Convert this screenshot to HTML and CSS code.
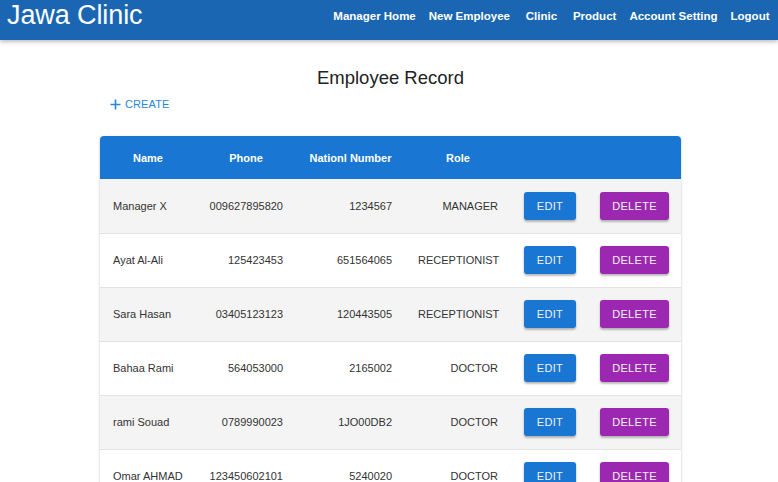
FILE: index.html
```html
<!DOCTYPE html>
<html>
<head>
<meta charset="utf-8">
<link rel="stylesheet" href="styles.css">
</head>
<body>
<header class="appbar">
  <div class="brand">Jawa Clinic</div>
  <nav class="nav">
    <a class="nav-link">Manager Home</a>
    <a class="nav-link">New Employee</a>
    <a class="nav-link">Clinic</a>
    <a class="nav-link">Product</a>
    <a class="nav-link">Account Setting</a>
    <a class="nav-link">Logout</a>
  </nav>
</header>
<main class="content">
  <h1 class="page-title">Employee Record</h1>
  <div class="create-row">
    <button class="create-btn">
      <svg class="plus" width="11" height="11" viewBox="0 0 11 11"><path d="M5.5 0.5v10M0.5 5.5h10" stroke="currentColor" stroke-width="1.6" fill="none"/></svg>
      CREATE
    </button>
  </div>
  <div class="paper">
    <table class="grid">
      <colgroup>
        <col class="c-name"><col class="c-phone"><col class="c-nat"><col class="c-role"><col class="c-edit"><col class="c-del">
      </colgroup>
      <thead>
        <tr><th>Name</th><th>Phone</th><th>Nationl Number</th><th>Role</th><th></th><th></th></tr>
      </thead>
      <tbody>
        <tr><td>Manager X</td><td class="num">009627895820</td><td class="num">1234567</td><td class="num">MANAGER</td><td><button class="btn edit">EDIT</button></td><td><button class="btn del">DELETE</button></td></tr>
        <tr><td>Ayat Al-Ali</td><td class="num">125423453</td><td class="num">651564065</td><td class="num">RECEPTIONIST</td><td><button class="btn edit">EDIT</button></td><td><button class="btn del">DELETE</button></td></tr>
        <tr><td>Sara Hasan</td><td class="num">03405123123</td><td class="num">120443505</td><td class="num">RECEPTIONIST</td><td><button class="btn edit">EDIT</button></td><td><button class="btn del">DELETE</button></td></tr>
        <tr><td>Bahaa Rami</td><td class="num">564053000</td><td class="num">2165002</td><td class="num">DOCTOR</td><td><button class="btn edit">EDIT</button></td><td><button class="btn del">DELETE</button></td></tr>
        <tr><td>rami Souad</td><td class="num">0789990023</td><td class="num">1JO00DB2</td><td class="num">DOCTOR</td><td><button class="btn edit">EDIT</button></td><td><button class="btn del">DELETE</button></td></tr>
        <tr><td>Omar AHMAD</td><td class="num">123450602101</td><td class="num">5240020</td><td class="num">DOCTOR</td><td><button class="btn edit">EDIT</button></td><td><button class="btn del">DELETE</button></td></tr>
      </tbody>
    </table>
  </div>
</main>
</body>
</html>
```
FILE: styles.css
```css
* { box-sizing: border-box; }
html, body { margin: 0; padding: 0; background: #fff; }
body { font-family: "Liberation Sans", Arial, sans-serif; color: #333; overflow: hidden; }

.appbar {
  height: 40px;
  background: #1b66b2;
  display: flex;
  justify-content: space-between;
  align-items: flex-start;
  padding: 0 2px 0 7px;
  box-shadow: 0 2px 4px rgba(0,0,0,0.25);
  position: relative;
}
.brand {
  color: #fff;
  font-size: 27px;
  line-height: 30px;
  letter-spacing: -0.1px;
}
.nav { display: flex; padding-top: 9px; }
.nav-link {
  color: #fff;
  font-weight: bold;
  font-size: 11.5px;
  line-height: 14px;
  padding: 0 6.5px;
  min-width: 50px;
  text-align: center;
  white-space: nowrap;
}
.nav-link:first-child { padding-left: 4px; }

.content { width: 581px; margin-left: 100px; }
.page-title {
  margin: 0;
  padding-top: 27px;
  font-size: 18.5px;
  font-weight: normal;
  line-height: 22px;
  text-align: center;
  color: #222;
}
.create-row { padding: 8px 0 0 10px; height: 47px; }
.create-btn {
  display: flex;
  align-items: center;
  gap: 4px;
  border: none;
  background: none;
  padding: 0;
  font-family: inherit;
  font-size: 11px;
  color: #2a86d6;
  letter-spacing: 0.1px;
  line-height: 14px;
}
.plus { display: block; }

.paper {
  border-radius: 4px;
  overflow: hidden;
  box-shadow: 0 1px 3px rgba(0,0,0,0.2), 0 1px 1px rgba(0,0,0,0.12);
}
.grid { width: 581px; border-collapse: collapse; table-layout: fixed; font-size: 11px; }
.c-name { width: 96px; }
.c-phone { width: 100px; }
.c-nat { width: 109px; }
.c-role { width: 106px; }
.c-edit { width: 77px; }
.c-del { width: 93px; }

.grid th {
  background: #1976d2;
  color: #fff;
  font-weight: bold;
  height: 43px;
  padding: 0 13px;
  text-align: center;
  white-space: nowrap;
}
.grid td {
  height: 54px;
  padding: 0 13px;
  border-bottom: 1px solid #e3e3e3;
  color: #333;
  white-space: nowrap;
}
.grid tbody tr:nth-child(odd) td { background: #f4f4f4; }
.grid td.num { text-align: right; }

.btn {
  border: none;
  border-radius: 3px;
  height: 28px;
  font-family: inherit;
  font-size: 11px;
  letter-spacing: 0.3px;
  color: #f2f2f2;
  box-shadow: 0 2px 2px rgba(0,0,0,0.2), 0 1px 3px rgba(0,0,0,0.12);
  padding: 0;
  display: block;
}
.edit { background: #1976d2; width: 52px; }
.del { background: #9c27b0; width: 69px; margin-left: -1px; }
```
